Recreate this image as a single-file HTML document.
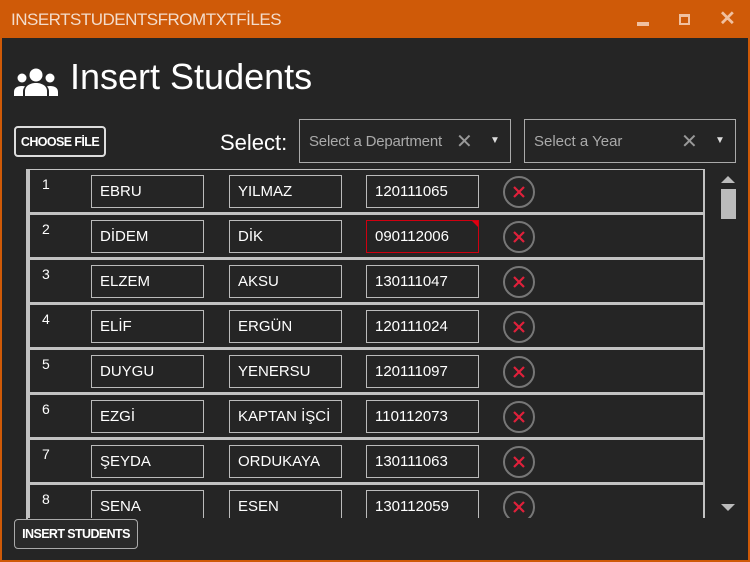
<!DOCTYPE html>
<html><head><meta charset="utf-8"><style>
*{margin:0;padding:0;box-sizing:border-box}
body{width:750px;height:562px;background:#252525;font-family:"Liberation Sans",sans-serif;color:#fff;overflow:hidden;position:relative}
.tb{position:absolute;left:0;top:0;width:750px;height:38px;background:#cf5a08;}
.frame{position:absolute;left:0;top:38px;width:750px;height:524px;border:2px solid #cf5a08;border-top:none}
.title{position:absolute;left:11px;top:10px;font-size:17px;color:#f3dccb;letter-spacing:-0.5px}
.a{position:absolute}
.btn{position:absolute;border:2px solid #ddd;border-radius:4px;font-weight:bold;font-size:12.5px;letter-spacing:-0.6px;text-align:center;color:#fff}
.sel{position:absolute;border:1px solid #aaa;color:#aaa;font-size:15px}
.row{position:absolute;left:28px;width:677px;height:45px;border:2px solid #c2c2c2;border-top:1px solid #c2c2c2}
.row .n{position:absolute;left:12px;top:6px;font-size:14px}
.tx{position:absolute;top:5px;height:33px;width:113px;border:1px solid #bbb;font-size:15px;padding:7px 0 0 8px}
.del{position:absolute;left:473px;top:6px;width:32px;height:32px;border:2px solid #777;border-radius:50%}
.del svg{position:absolute;left:7px;top:7px}
</style></head><body>
<div class="tb"></div><div class="frame"></div>
<div class="title">INSERTSTUDENTSFROMTXTFİLES</div>
<div class="a" style="left:637px;top:22px;width:12px;height:4px;background:#f0c0a0"></div>
<div class="a" style="left:679px;top:14px;width:11px;height:11px;border:2px solid #f0c0a0;border-top-width:3px"></div>
<div class="a" style="left:719px;top:6px;font-size:20px;color:#f0c0a0;font-weight:bold">✕</div>
<svg class="a" style="left:13px;top:66px" width="46" height="32" viewBox="0 0 46 32" fill="#fff">
<circle cx="23" cy="9" r="6.5"/><circle cx="9" cy="12" r="4.5"/><circle cx="37" cy="12" r="4.5"/>
<path d="M12 30v-5c0-5 5-8 11-8s11 3 11 8v5z"/><path d="M1 30v-4c0-4 3-6 8-6 2 0 3 .5 3 .5-1.5 1.5-2 3-2 5v4.5z"/><path d="M45 30v-4c0-4-3-6-8-6-2 0-3 .5-3 .5 1.5 1.5 2 3 2 5v4.5z"/>
</svg>
<div class="a" style="left:70px;top:56px;font-size:36px">Insert Students</div>
<div class="btn" style="left:14px;top:126px;width:92px;height:31px;line-height:28px">CHOOSE FİLE</div>
<div class="a" style="left:220px;top:130px;font-size:22px">Select:</div>
<div class="sel" style="left:299px;top:119px;width:212px;height:44px"><span class="a" style="left:9px;top:13px;letter-spacing:-0.2px">Select a Department</span><span class="a" style="left:156px;top:9px;font-size:20px;color:#999">✕</span><span class="a" style="left:190px;top:15px;font-size:10px;color:#ddd">▼</span></div>
<div class="sel" style="left:524px;top:119px;width:212px;height:44px"><span class="a" style="left:9px;top:13px">Select a Year</span><span class="a" style="left:156px;top:9px;font-size:20px;color:#999">✕</span><span class="a" style="left:190px;top:15px;font-size:10px;color:#ddd">▼</span></div>
<div class="a" style="left:26px;top:169px;width:2px;height:350px;background:#c2c2c2"></div>
<div class="a" style="left:27px;top:169px;width:680px;height:349px;overflow:hidden">
<div style="position:relative;left:-27px;top:-169px">
<div class="row" style="top:169px"><span class="n">1</span><div class="tx" style="left:61px">EBRU</div><div class="tx" style="left:199px">YILMAZ</div><div class="tx" style="left:336px">120111065</div><div class="del"><svg width="14" height="14"><path d="M2 2L12 12M12 2L2 12" stroke="#e0203a" stroke-width="2.2"/></svg></div></div>
<div class="row" style="top:214px"><span class="n">2</span><div class="tx" style="left:61px">DİDEM</div><div class="tx" style="left:199px">DİK</div><div class="tx" style="left:336px;border-color:#d00010">090112006<span class="a" style="right:0;top:0;width:0;height:0;border-top:6px solid #e00010;border-left:6px solid transparent"></span></div><div class="del"><svg width="14" height="14"><path d="M2 2L12 12M12 2L2 12" stroke="#e0203a" stroke-width="2.2"/></svg></div></div>
<div class="row" style="top:259px"><span class="n">3</span><div class="tx" style="left:61px">ELZEM</div><div class="tx" style="left:199px">AKSU</div><div class="tx" style="left:336px">130111047</div><div class="del"><svg width="14" height="14"><path d="M2 2L12 12M12 2L2 12" stroke="#e0203a" stroke-width="2.2"/></svg></div></div>
<div class="row" style="top:304px"><span class="n">4</span><div class="tx" style="left:61px">ELİF</div><div class="tx" style="left:199px">ERGÜN</div><div class="tx" style="left:336px">120111024</div><div class="del"><svg width="14" height="14"><path d="M2 2L12 12M12 2L2 12" stroke="#e0203a" stroke-width="2.2"/></svg></div></div>
<div class="row" style="top:349px"><span class="n">5</span><div class="tx" style="left:61px">DUYGU</div><div class="tx" style="left:199px">YENERSU</div><div class="tx" style="left:336px">120111097</div><div class="del"><svg width="14" height="14"><path d="M2 2L12 12M12 2L2 12" stroke="#e0203a" stroke-width="2.2"/></svg></div></div>
<div class="row" style="top:394px"><span class="n">6</span><div class="tx" style="left:61px">EZGİ</div><div class="tx" style="left:199px">KAPTAN İŞCİ</div><div class="tx" style="left:336px">110112073</div><div class="del"><svg width="14" height="14"><path d="M2 2L12 12M12 2L2 12" stroke="#e0203a" stroke-width="2.2"/></svg></div></div>
<div class="row" style="top:439px"><span class="n">7</span><div class="tx" style="left:61px">ŞEYDA</div><div class="tx" style="left:199px">ORDUKAYA</div><div class="tx" style="left:336px">130111063</div><div class="del"><svg width="14" height="14"><path d="M2 2L12 12M12 2L2 12" stroke="#e0203a" stroke-width="2.2"/></svg></div></div>
<div class="row" style="top:484px"><span class="n">8</span><div class="tx" style="left:61px">SENA</div><div class="tx" style="left:199px">ESEN</div><div class="tx" style="left:336px">130112059</div><div class="del"><svg width="14" height="14"><path d="M2 2L12 12M12 2L2 12" stroke="#e0203a" stroke-width="2.2"/></svg></div></div>
</div></div>
<div class="a" style="left:721px;top:176px;width:0;height:0;border-left:7px solid transparent;border-right:7px solid transparent;border-bottom:7px solid #bbb"></div>
<div class="a" style="left:721px;top:189px;width:15px;height:30px;background:#bbb"></div>
<div class="a" style="left:721px;top:504px;width:0;height:0;border-left:7px solid transparent;border-right:7px solid transparent;border-top:7px solid #bbb"></div>
<div class="btn" style="left:14px;top:519px;width:124px;height:30px;line-height:28px;border:1px solid #aaa;background:#2a2a2a">INSERT STUDENTS</div>
</body></html>
